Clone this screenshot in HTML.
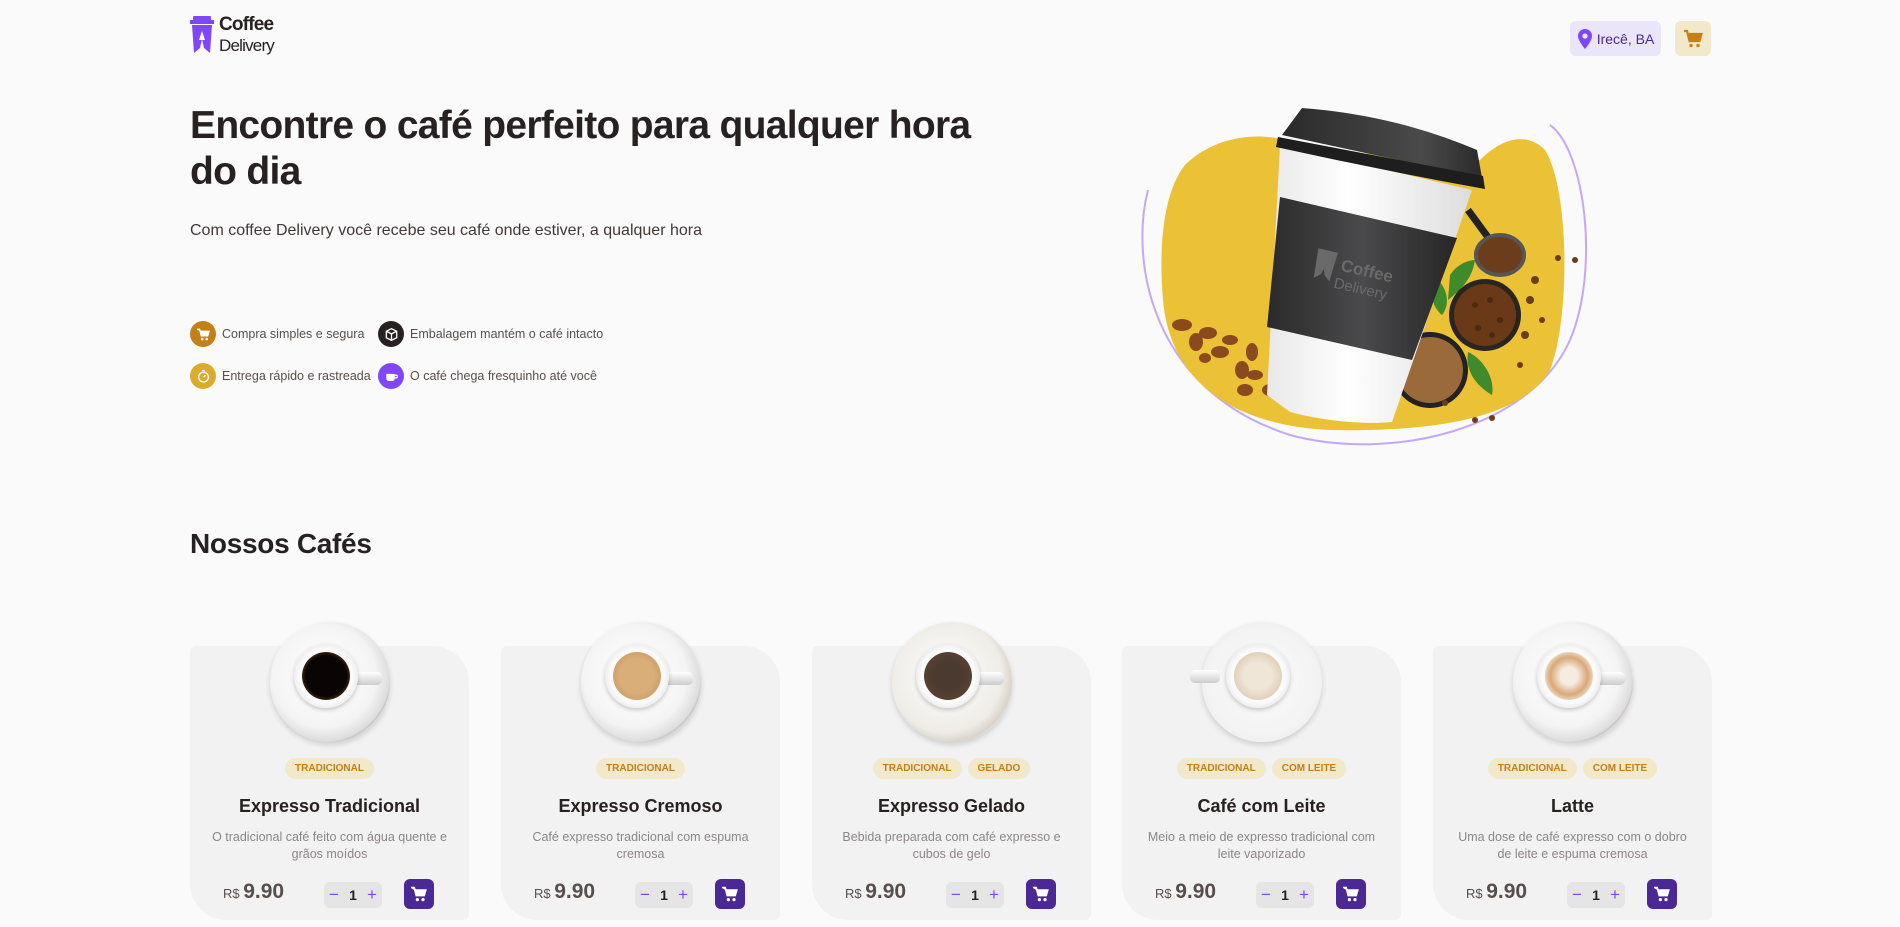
<!DOCTYPE html>
<html><head><meta charset="utf-8"><style>
*{margin:0;padding:0;box-sizing:border-box}
body{width:1900px;height:927px;overflow:hidden;background:#FAFAFA;font-family:"Liberation Sans",sans-serif;color:#403937;position:relative}
.abs{position:absolute}
h1{position:absolute;left:190px;top:103px;font-size:39px;line-height:46px;font-weight:bold;color:#272221;letter-spacing:-0.7px}
.sub{left:190px;top:222px;font-size:16px;color:#403937}
.feat{display:flex;align-items:center;font-size:12.5px;color:#574F4D}
.ic{width:26px;height:26px;border-radius:50%;margin-right:6px;display:flex;align-items:center;justify-content:center}
h2{position:absolute;left:190px;top:528px;font-size:28px;font-weight:bold;color:#272221;letter-spacing:-0.3px}
.card{position:absolute;top:646px;width:279px;height:274px;background:#F3F2F2;border-radius:6px 36px 6px 36px;text-align:center}
.cup{position:absolute;left:80px;top:-24px;width:120px;height:120px;border-radius:50%;background:radial-gradient(circle at 45% 45%,#fff 0,#f4f4f4 55%,#ddd 70%,#c9c3c3 72%,#f0f0f0 74%);box-shadow:0 3px 6px rgba(0,0,0,.15)}
.cup .h{position:absolute;left:82px;top:50px;width:30px;height:13px;border-radius:5px;background:linear-gradient(#fff,#ccc)}
.cup .rim{position:absolute;left:24px;top:22px;width:64px;height:64px;border-radius:50%;background:radial-gradient(circle,#fafafa 60%,#ccc 100%);box-shadow:0 2px 4px rgba(0,0,0,.2)}
.cup .cf{position:absolute;left:8px;top:8px;width:48px;height:48px;border-radius:50%}
.tags{position:absolute;top:112px;left:0;right:0;display:flex;justify-content:center;gap:6px}
.tag{background:#F1E9C9;color:#C47F17;font-size:10px;font-weight:bold;padding:5px 10px;border-radius:100px}
.nm{position:absolute;top:150px;left:0;right:0;font-size:18px;font-weight:bold;color:#272221}
.ds{position:absolute;top:183px;left:18px;right:18px;font-size:12.5px;line-height:17px;color:#8D8686}
.pr{position:absolute;top:234px;left:33px;font-size:21px;font-weight:bold;color:#574F4D}
.pr small{font-size:13px;font-weight:normal}
.qty{position:absolute;top:236px;left:134px;width:58px;height:26px;background:#E6E5E5;border-radius:6px;display:flex;align-items:center;justify-content:space-around;font-size:14px;font-weight:bold;color:#272221}
.qty span{color:#8047F8;font-weight:normal;font-size:17px}
.bt{position:absolute;top:233px;left:214px;width:30px;height:30px;background:#4B2995;border-radius:6px;display:flex;align-items:center;justify-content:center}
</style></head><body>
<div class="abs" style="left:190px;top:16px;">
<svg width="24" height="40" viewBox="0 0 24 40"><rect x="3" y="0" width="18" height="5" rx="1" fill="#8047F8"/><rect x="0" y="4" width="24" height="4" fill="#8047F8"/><path d="M2 9h20l-2 28-6-5-2-9-2 9-6 5z" fill="#8047F8"/><path d="M12 15l-3 9h6z" fill="#fff"/></svg>
</div>
<div class="abs" style="left:219px;top:14px;font-size:19px;line-height:21px;color:#272221;letter-spacing:-0.8px"><b>Coffee</b><br><span style="font-size:17px">Delivery</span></div>
<div class="abs" style="left:1570px;top:21px;width:91px;height:35px;background:#EBE5F9;border-radius:6px;display:flex;align-items:center;justify-content:center;gap:4px;color:#4B2995;font-size:14px">
<svg width="16" height="20" viewBox="0 0 16 20"><path d="M8 0a7 7 0 0 0-7 7c0 5 7 13 7 13s7-8 7-13a7 7 0 0 0-7-7z" fill="#8047F8"/><circle cx="8" cy="7" r="2.6" fill="#EBE5F9"/></svg><span style="color:#4B2995">Irecê, BA</span></div>
<div class="abs" style="left:1675px;top:21px;width:36px;height:35px;background:#F1E9C9;border-radius:6px;display:flex;align-items:center;justify-content:center">
<svg width="20" height="20" viewBox="0 0 20 20"><path d="M1 2h3l2.5 10h10l2-7H6" fill="none" stroke="#C47F17" stroke-width="2.2"/><path d="M5 5h14l-2 7H6z" fill="#C47F17"/><circle cx="8" cy="16.5" r="1.7" fill="#C47F17"/><circle cx="15" cy="16.5" r="1.7" fill="#C47F17"/></svg></div>

<h1>Encontre o café perfeito para qualquer hora<br>do dia</h1>
<div class="abs sub">Com coffee Delivery você recebe seu café onde estiver, a qualquer hora</div>

<div class="abs feat" style="left:190px;top:321px"><div class="ic" style="background:#C47F17"><svg width="13" height="13" viewBox="0 0 20 20"><path d="M1 2h3l2.5 10h10l2-7H6z" fill="#fff" stroke="#fff" stroke-width="2"/><circle cx="8" cy="17" r="2" fill="#fff"/><circle cx="15" cy="17" r="2" fill="#fff"/></svg></div>Compra simples e segura</div>
<div class="abs feat" style="left:378px;top:321px"><div class="ic" style="background:#272221"><svg width="13" height="13" viewBox="0 0 20 20"><path d="M10 1l8 4v10l-8 4-8-4V5z" fill="none" stroke="#fff" stroke-width="2"/><path d="M2 5l8 4 8-4M10 9v10" stroke="#fff" stroke-width="2" fill="none"/></svg></div>Embalagem mantém o café intacto</div>
<div class="abs feat" style="left:190px;top:363px"><div class="ic" style="background:#DBAC2C"><svg width="13" height="13" viewBox="0 0 20 20"><circle cx="10" cy="11" r="7.5" fill="none" stroke="#fff" stroke-width="2"/><path d="M10 11l3-3M8 1h4" stroke="#fff" stroke-width="2"/></svg></div>Entrega rápido e rastreada</div>
<div class="abs feat" style="left:378px;top:363px"><div class="ic" style="background:#8047F8"><svg width="13" height="13" viewBox="0 0 20 20"><path d="M2 6h13v7a4 4 0 0 1-4 4H6a4 4 0 0 1-4-4z" fill="#fff"/><path d="M15 8h2a2 2 0 0 1 0 4h-2" fill="none" stroke="#fff" stroke-width="2"/></svg></div>O café chega fresquinho até você</div>

<svg class="abs" style="left:1130px;top:90px" width="460" height="370" viewBox="0 0 460 370">
<defs><linearGradient id="sl" x1="0" x2="1"><stop offset="0" stop-color="#2a2a2a"/><stop offset=".5" stop-color="#4a4a4c"/><stop offset="1" stop-color="#262626"/></linearGradient>
<linearGradient id="wh" x1="0" x2="1"><stop offset="0" stop-color="#e8e8e8"/><stop offset=".4" stop-color="#fff"/><stop offset="1" stop-color="#ddd"/></linearGradient>
<linearGradient id="ld" x1="0" x2="1"><stop offset="0" stop-color="#2a2a2a"/><stop offset=".7" stop-color="#4a4a4a"/><stop offset="1" stop-color="#2a2a2a"/></linearGradient></defs>
<path d="M18 100 C0 170 20 300 160 345 C260 372 400 340 440 250 C470 180 455 60 420 35" fill="none" stroke="#C4A8F8" stroke-width="2"/>
<path d="M55 75 C90 40 150 40 175 60 L350 70 C370 50 395 40 415 60 C440 100 440 230 420 280 C390 330 300 342 200 340 C100 335 40 290 33 210 C28 150 35 100 55 75z" fill="#EBC135"/>
<g fill="#8a4a1e">
<ellipse cx="52" cy="235" rx="10" ry="6"/><ellipse cx="78" cy="243" rx="9" ry="6"/><ellipse cx="66" cy="252" rx="7" ry="9"/><ellipse cx="100" cy="250" rx="8" ry="5"/><ellipse cx="90" cy="262" rx="9" ry="6"/><ellipse cx="122" cy="262" rx="6" ry="9"/><ellipse cx="112" cy="280" rx="7" ry="9"/><ellipse cx="125" cy="285" rx="8" ry="5"/><ellipse cx="115" cy="300" rx="8" ry="6"/><ellipse cx="140" cy="300" rx="8" ry="6"/><ellipse cx="160" cy="305" rx="6" ry="9"/><ellipse cx="75" cy="268" rx="6" ry="5"/>
</g>
<path d="M338 120 L360 150" stroke="#222" stroke-width="7"/>
<ellipse cx="370" cy="165" rx="24" ry="20" fill="#6b3d1a" stroke="#555" stroke-width="4"/>
<path d="M320 185 C330 170 345 170 345 170 C342 190 330 200 318 210z" fill="#3f8a2a"/>
<path d="M308 190 C318 200 320 215 312 225 C300 215 300 200 308 190z" fill="#3f8a2a"/>
<path d="M338 262 C355 270 365 290 362 305 C345 295 335 280 338 262z" fill="#3f8a2a"/>
<circle cx="355" cy="225" r="36" fill="#2a2522"/><circle cx="355" cy="225" r="31" fill="#6a3a18"/>
<g fill="#3a1e0c" opacity=".6"><circle cx="345" cy="215" r="3"/><circle cx="360" cy="210" r="3"/><circle cx="370" cy="230" r="3"/><circle cx="348" cy="238" r="3"/><circle cx="362" cy="245" r="3"/></g>
<circle cx="300" cy="280" r="38" fill="#222"/><circle cx="300" cy="280" r="33" fill="#9a6a3a"/>
<g fill="#6b3d1a"><circle cx="400" cy="210" r="4"/><circle cx="412" cy="230" r="3"/><circle cx="395" cy="245" r="4"/><circle cx="428" cy="168" r="3"/><circle cx="445" cy="170" r="3"/><circle cx="405" cy="190" r="4"/><circle cx="390" cy="275" r="3"/><circle cx="345" cy="330" r="3"/><circle cx="362" cy="328" r="3"/><circle cx="315" cy="313" r="3"/></g>
<path d="M150 55 L342 100 L262 332 C230 335 190 330 160 322 L137 305 Z" fill="url(#wh)"/>
<path d="M150 107 L327 148 L282 270 L137 237 Z" fill="url(#sl)"/>
<path d="M172 18 Q265 25 347 60 L352 88 L152 45 Z" fill="url(#ld)"/>
<path d="M148 47 L353 86 L355 99 Q250 80 146 57 Z" fill="#1e1e1e"/>
<g transform="rotate(13 215 190)" fill="#6a6a6a">
<path d="M182 165h20l-2 30-6-5-2-6-2 6-6 5z"/>
<text x="208" y="182" font-family="Liberation Sans,sans-serif" font-weight="bold" font-size="17">Coffee</text>
<text x="205" y="200" font-family="Liberation Sans,sans-serif" font-size="15">Delivery</text>
</g>
</svg>

<h2>Nossos Cafés</h2>

<div class="card" style="left:190px"><div class="cup"><div class="h"></div><div class="rim"><div class="cf" style="background:radial-gradient(circle,#0a0504 60%,#7a4a20 85%,#b8864a 100%)"></div></div></div>
<div class="tags"><span class="tag">TRADICIONAL</span></div><div class="nm">Expresso Tradicional</div><div class="ds">O tradicional café feito com água quente e grãos moídos</div>
<div class="pr"><small>R$ </small>9.90</div><div class="qty"><span>−</span>1<span>+</span></div><div class="bt"><svg width="16" height="16" viewBox="0 0 20 20"><path d="M1 2h3l2.5 10h10l2-7H6z" fill="#fff" stroke="#fff" stroke-width="2"/><circle cx="8" cy="17" r="2" fill="#fff"/><circle cx="15" cy="17" r="2" fill="#fff"/></svg></div></div>

<div class="card" style="left:501px"><div class="cup"><div class="h"></div><div class="rim"><div class="cf" style="background:radial-gradient(circle,#d9ae78 50%,#c89660 90%,#a8733f 100%)"></div></div></div>
<div class="tags"><span class="tag">TRADICIONAL</span></div><div class="nm">Expresso Cremoso</div><div class="ds">Café expresso tradicional com espuma cremosa</div>
<div class="pr"><small>R$ </small>9.90</div><div class="qty"><span>−</span>1<span>+</span></div><div class="bt"><svg width="16" height="16" viewBox="0 0 20 20"><path d="M1 2h3l2.5 10h10l2-7H6z" fill="#fff" stroke="#fff" stroke-width="2"/><circle cx="8" cy="17" r="2" fill="#fff"/><circle cx="15" cy="17" r="2" fill="#fff"/></svg></div></div>

<div class="card" style="left:812px"><div class="cup" style="background:radial-gradient(circle at 45% 45%,#fff 0,#efece6 60%,#d8d2c8 72%,#f0f0f0 74%)"><div class="h"></div><div class="rim"><div class="cf" style="background:radial-gradient(circle,#4a3a30 40%,#5a4232 75%,#8a5a2a 100%)"></div></div></div>
<div class="tags"><span class="tag">TRADICIONAL</span><span class="tag">GELADO</span></div><div class="nm">Expresso Gelado</div><div class="ds">Bebida preparada com café expresso e cubos de gelo</div>
<div class="pr"><small>R$ </small>9.90</div><div class="qty"><span>−</span>1<span>+</span></div><div class="bt"><svg width="16" height="16" viewBox="0 0 20 20"><path d="M1 2h3l2.5 10h10l2-7H6z" fill="#fff" stroke="#fff" stroke-width="2"/><circle cx="8" cy="17" r="2" fill="#fff"/><circle cx="15" cy="17" r="2" fill="#fff"/></svg></div></div>

<div class="card" style="left:1122px"><div class="cup" style="background:radial-gradient(circle,#fafafa 0,#f3f3f3 65%,#eee 74%)"><div class="h" style="left:-12px;top:48px"></div><div class="rim"><div class="cf" style="background:radial-gradient(circle,#efe6d8 40%,#dccab0 80%,#c9b08a 100%)"></div></div></div>
<div class="tags"><span class="tag">TRADICIONAL</span><span class="tag">COM LEITE</span></div><div class="nm">Café com Leite</div><div class="ds">Meio a meio de expresso tradicional com leite vaporizado</div>
<div class="pr"><small>R$ </small>9.90</div><div class="qty"><span>−</span>1<span>+</span></div><div class="bt"><svg width="16" height="16" viewBox="0 0 20 20"><path d="M1 2h3l2.5 10h10l2-7H6z" fill="#fff" stroke="#fff" stroke-width="2"/><circle cx="8" cy="17" r="2" fill="#fff"/><circle cx="15" cy="17" r="2" fill="#fff"/></svg></div></div>

<div class="card" style="left:1433px"><div class="cup"><div class="h"></div><div class="rim"><div class="cf" style="background:radial-gradient(circle,#f5ece0 25%,#d9a878 55%,#f0e0cc 75%,#c08850 100%)"></div></div></div>
<div class="tags"><span class="tag">TRADICIONAL</span><span class="tag">COM LEITE</span></div><div class="nm">Latte</div><div class="ds">Uma dose de café expresso com o dobro de leite e espuma cremosa</div>
<div class="pr"><small>R$ </small>9.90</div><div class="qty"><span>−</span>1<span>+</span></div><div class="bt"><svg width="16" height="16" viewBox="0 0 20 20"><path d="M1 2h3l2.5 10h10l2-7H6z" fill="#fff" stroke="#fff" stroke-width="2"/><circle cx="8" cy="17" r="2" fill="#fff"/><circle cx="15" cy="17" r="2" fill="#fff"/></svg></div></div>
</body></html>
